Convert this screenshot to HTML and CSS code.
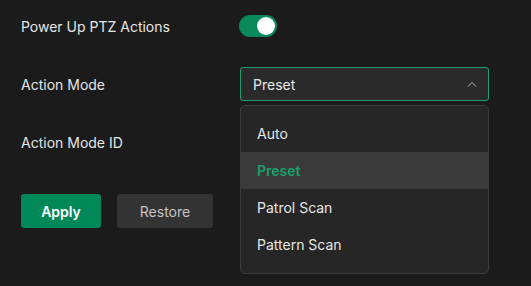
FILE: index.html
```html
<!DOCTYPE html>
<html lang="en">
<head>
    <meta charset="UTF-8">
    <title>PTZ Settings</title>
    <link rel="stylesheet" href="styles.css">
</head>
<body>

<div class="panel">
    <div class="form-row">
        <div class="label">Power Up PTZ Actions</div>
        <div class="control">
            <div class="switch on"><div class="knob"></div></div>
        </div>
    </div>
    <div class="form-row">
        <div class="label">Action Mode</div>
        <div class="control select-wrap">
            <div class="select open">
                <span>Preset</span>
                <svg class="chevron" width="10" height="6" viewBox="0 0 10 6">
                    <path d="M1 5.5 L5 1.5 L9 5.5" fill="none" stroke="#7a7a7a" stroke-width="1.2"/>
                </svg>
            </div>
            <ul class="menu">
                <li>Auto</li>
                <li class="selected">Preset</li>
                <li>Patrol Scan</li>
                <li>Pattern Scan</li>
            </ul>
        </div>
    </div>
    <div class="form-row">
        <div class="label">Action Mode ID</div>
        <div class="control"></div>
    </div>
    <div class="buttons">
        <button class="btn primary">Apply</button>
        <button class="btn secondary">Restore</button>
    </div>
</div>

</body>
</html>
```

FILE: styles.css
```css
html, body {
    height: 100%;
}
body {
    margin: 0;
    min-height: 286px;
    background-color: #1b1b1b;
    font-family: Inter, "Noto Sans", sans-serif;
    font-size: 14px;
    color: #e6e6e6;
}
.panel {
    padding: 9px 0 0 21px;
}
.form-row {
    display: flex;
    align-items: center;
    height: 34px;
    margin-bottom: 24px;
}
.label {
    width: 218px;
}
.control {
    width: 249px;
}
.switch {
    width: 38px;
    height: 22px;
    border-radius: 11px;
    background-color: #0a8a5c;
    display: flex;
    align-items: center;
    padding: 0 2px;
    box-sizing: border-box;
}
.switch.on {
    justify-content: flex-end;
}
.switch .knob {
    width: 18px;
    height: 18px;
    border-radius: 50%;
    background-color: #fff;
}
.select-wrap {
    position: relative;
    margin-left: 1px;
}
.select {
    height: 34px;
    box-sizing: border-box;
    border: 1px solid #1e9e6e;
    border-radius: 3px;
    background-color: #2a2a2a;
    display: flex;
    align-items: center;
    justify-content: space-between;
    padding: 0 11px 0 12px;
    color: #e8e8e8;
}
.menu {
    position: absolute;
    top: 38px;
    left: 0;
    width: 249px;
    box-sizing: border-box;
    margin: 0;
    padding: 9px 0 10px;
    list-style: none;
    background-color: #262626;
    border: 1px solid #3b3b3b;
    border-radius: 5px;
    z-index: 2;
}
.menu li {
    height: 37px;
    line-height: 37px;
    padding-left: 16px;
    color: #e6e6e6;
}
.menu li.selected {
    background-color: #3a3a3a;
    color: #1aa06c;
    font-weight: 600;
}
.buttons {
    display: flex;
    gap: 16px;
    margin-top: 35px;
}
.btn {
    height: 34px;
    border: none;
    border-radius: 3px;
    font-family: inherit;
    font-size: 14px;
    cursor: pointer;
}
.btn.primary {
    width: 80px;
    background-color: #018858;
    color: #fff;
    font-weight: 600;
}
.btn.secondary {
    width: 96px;
    background-color: #333333;
    color: #c4c4c4;
}
```
